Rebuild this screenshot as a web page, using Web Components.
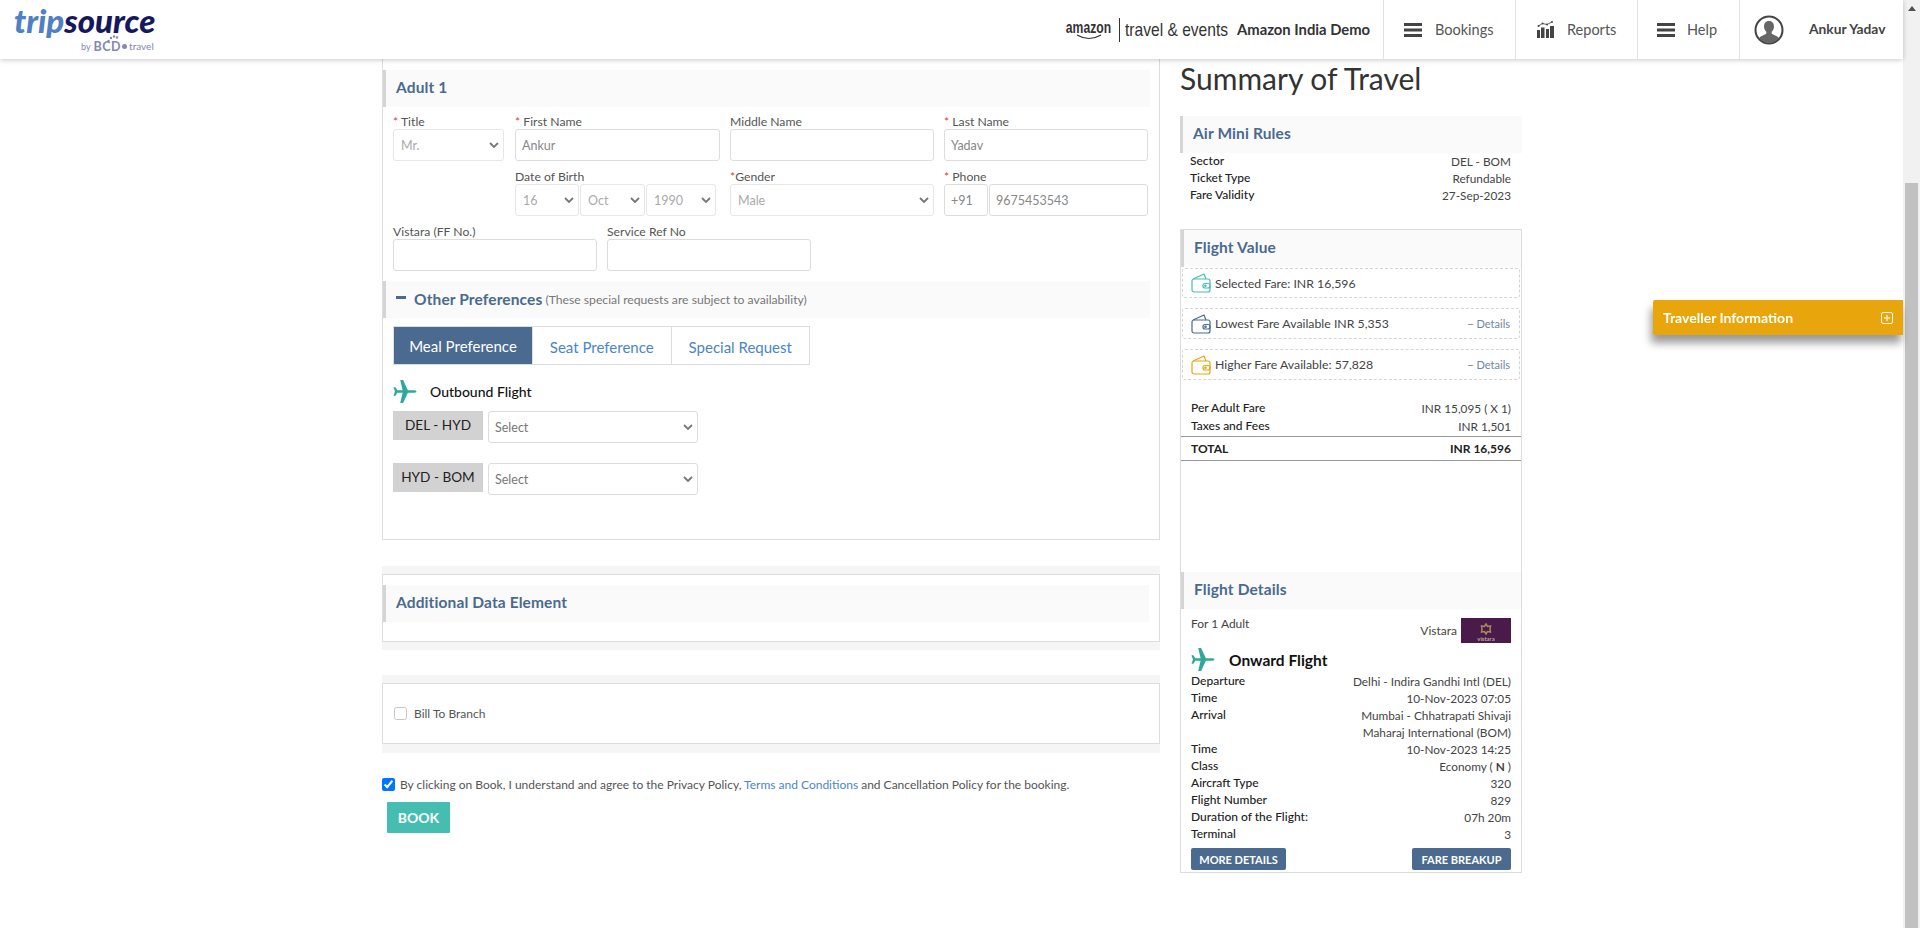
<!DOCTYPE html>
<html>
<head>
<meta charset="utf-8">
<title>TripSource</title>
<style>
html, body { margin: 0; height: 100%; overflow: hidden; background: #fff; }
body { font-family: Lato, "Liberation Sans", sans-serif; font-size: 12px; color: #444; }
</style>
</head>
<body>
<trip-app>
  <site-header slot="header"></site-header>
  <booking-form slot="left"></booking-form>
  <travel-summary slot="right"></travel-summary>
  <traveller-tab slot="float"></traveller-tab>
</trip-app>

<script>
const PLANE = '<svg viewBox="0 0 24 24" width="24" height="23" fill="#2fa89b"><path d="M7 0h3l5 10.6h7q2 .4 2 1.4t-2 1.4h-7L10 24H7l2.5-10.6H4L2 16.5H0L1.5 12 0 7.5h2l2 3.1h5.5z"/></svg>';
const CHEVRON = '<svg viewBox="0 0 10 6" width="10" height="6" fill="none" stroke="#777" stroke-width="1.8"><path d="M1 1l4 4 4-4"/></svg>';
const BURGER = '<svg viewBox="0 0 18 14" width="18" height="14" fill="#444"><path d="M0 0h18v3H0zM0 5.500h18v3H0zM0 11h18v3H0z"/></svg>';
const CHART = '<svg viewBox="0 0 17 17" width="17" height="17" fill="#444"><path d="M0 9h3v8H0zM4 6.500h3.500V17H4zM9 8h3v9H9zM13 5h4v12h-4z"/><path d="M1.500 5l4-2.500 4.500 1L15 1" fill="none" stroke="#666"/><circle cx="1.500" cy="5" r="1"/><circle cx="5.500" cy="2.500" r="1"/><circle cx="10" cy="3.500" r="1"/><circle cx="15" cy="1" r="1"/></svg>';

function wallet(color) {
  return `<svg viewBox="0 0 20 20" width="20" height="20" fill="none" stroke="${color}" stroke-width="1.200"><rect x="1" y="6" width="18" height="13" rx="2"/><path d="M2 6l11-5 2 5"/><rect x="12" y="10.500" width="7" height="4.500" rx="2"/><circle cx="14.500" cy="12.700" r=".7"/></svg>`;
}

function def(name, html, init) {
  const tpl = document.createElement('template');
  tpl.innerHTML = html;
  customElements.define(name, class extends HTMLElement {
    constructor() {
      super();
      this.attachShadow({ mode: 'open' }).appendChild(tpl.content.cloneNode(true));
      if (init) init(this, this.shadowRoot);
    }
  });
}

def('trip-app', `
<style>
:host { display: flex; height: 928px; }
.page { flex: 1; min-width: 0; display: flex; flex-direction: column; }
.main { display: flex; gap: 20px; padding-left: 382px; }
.bar { width: 17px; background: #f1f1f1; display: flex; flex-direction: column; }
.arrow { height: 17px; display: flex; align-items: center; justify-content: center; }
.gap { height: 166px; }
.thumb { flex: 1; background: #c1c1c1; margin: 0 2px; }
</style>
<div class="page">
  <slot name="header"></slot>
  <div class="main"><slot name="left"></slot><slot name="right"></slot></div>
</div>
<div class="bar">
  <div class="arrow"><svg width="8" height="5" viewBox="0 0 8 5" fill="#505050"><path d="M4 0l4 5H0z"/></svg></div>
  <div class="gap"></div>
  <div class="thumb"></div>
</div>
<slot name="float"></slot>`);

def('nav-item', `
<style>
:host { display: flex; align-items: center; height: 59px; border-left: 1px solid #e3e3e3; box-sizing: border-box; font-size: 14.500px; color: #555; }
::slotted(svg) { margin-right: 13px; }
</style>
<slot></slot>`);

def('site-header', `
<style>
:host { display: flex; align-items: center; height: 59px; background: #fff; box-shadow: 0 1px 5px rgba(0,0,0,.22); position: relative; z-index: 2; }
.logo { margin-left: 14px; width: 143px; display: flex; flex-direction: column; align-self: flex-start; }
.word { font: italic 900 33px/40px Lato, sans-serif; letter-spacing: 0; color: #16185f; height: 40px; white-space: nowrap; }
.word span { color: #4f7fc4; }
.by { position: relative; display: flex; align-items: center; font: 400 9px/13px Lato, sans-serif; color: #8587b4; margin-left: 67px; white-space: nowrap; height: 13px; }
.by b { font-size: 12.500px; letter-spacing: .5px; margin-left: 3px; }
.by i { display: inline-block; width: 5px; height: 5px; border-radius: 50%; background: #8587b4; margin: 0 2px 0 1px; }
.by em { font-style: normal; font-size: 10px; }
.by svg { position: absolute; left: 26px; top: -5px; }
.right { margin-left: auto; display: flex; align-items: center; }
.amz { width: 47px; text-align: center; color: #333; margin-top: 1px; }
.amz span { display: block; font: 700 16px/15px "Liberation Sans", sans-serif; transform: scaleX(.76); white-space: nowrap; margin: 0 -10px; }
.amz svg { display: block; margin: -1px auto 0; }
.sep { width: 1px; height: 24px; background: #333; margin: 0 5px 0 7px; }
.te { font: 400 19px/20px "Liberation Sans", sans-serif; color: #333; width: 101px; white-space: nowrap; transform: scaleX(.82); transform-origin: 0 50%; }
.demo { font-weight: 700; font-size: 14.800px; color: #333; margin: 0 11px 0 11px; width: 135px; white-space: nowrap; margin-top: -1px; }
.b { width: 132px; padding-left: 20px; box-sizing: border-box; }
.r { width: 122px; padding-left: 21px; box-sizing: border-box; }
.h { width: 102px; padding-left: 19px; box-sizing: border-box; }
.u { width: 164px; padding-left: 14px; box-sizing: border-box; }
.u svg { margin-right: 0; }
.name { font-weight: 700; color: #444; margin-left: 25px; white-space: nowrap; font-size: 13.800px; margin-top: -2px; }
</style>
<div class="logo">
  <div class="word"><span>trip</span>source</div>
  <div class="by">by<b>BCD</b><i></i><em>travel</em><svg width="12" height="8" viewBox="0 0 12 8" fill="#8587b4"><circle cx="1.500" cy="6" r="1.200"/><circle cx="4" cy="3" r="1.200"/><circle cx="7" cy="1.500" r="1.200"/><circle cx="10" cy="2.500" r="1.200"/></svg></div>
</div>
<div class="right">
  <div class="amz"><span>amazon</span><svg width="26" height="6" viewBox="0 0 26 6" fill="none" stroke="#333" stroke-width="1.200"><path d="M1 1q12 7 24 0"/></svg></div>
  <div class="sep"></div>
  <div class="te">travel &amp; events</div>
  <div class="demo">Amazon India Demo</div>
  <nav-item class="b">${BURGER}Bookings</nav-item>
  <nav-item class="r">${CHART}Reports</nav-item>
  <nav-item class="h"><span style="display:flex;margin-right:12px">${BURGER}</span>Help</nav-item>
  <nav-item class="u"><svg width="30" height="30" viewBox="0 0 30 30" fill="none"><circle cx="15" cy="15" r="13.500" stroke="#444" stroke-width="2"/><path fill="#666" d="M15 6c3.500 0 5 2.600 5 5.500 0 2.300-1 4-2.300 5.200v2l6 3c.6.400 1 1 1 1.600A12.500 12.500 0 0 1 15 28a12.500 12.500 0 0 1-9.700-4.700c0-.6.400-1.200 1-1.600l6-3v-2C11 15.500 10 13.800 10 11.500 10 8.600 11.500 6 15 6z"/></svg><span class="name">Ankur Yadav</span></nav-item>
</div>`);

def('section-head', `
<style>
:host { display: flex; align-items: center; height: 37px; background: #fafafa; border-left: 3px solid #d5d5d5; box-sizing: border-box; padding: 0 0 4px 10px; font-size: 15.500px; font-weight: 700; letter-spacing: .12px; color: #4a6a8f; white-space: nowrap; }
</style>
<slot></slot>`);

def('form-field', `
<style>
:host { display: block; }
.l { height: 14px; line-height: 14px; font-size: 12.200px; color: #555; white-space: nowrap; }
.s { color: #e0403a; display: none; }
:host([req]) .s { display: inline; }
:host([req="tight"]) .g { display: none; }
</style>
<div class="l"><span class="s">*<span class="g">&nbsp;</span></span><span class="t"></span></div>
<slot></slot>`, (el, root) => {
  root.querySelector('.t').textContent = el.getAttribute('label');
});

def('text-box', `
<style>
:host { display: flex; align-items: center; height: 32px; box-sizing: border-box; border: 1px solid #ddd; border-radius: 3px; padding: 0 6px; font-size: 12.500px; color: #888; background: #fff; white-space: nowrap; }
</style>
<slot></slot>`);

def('select-box', `
<style>
:host { display: flex; align-items: center; justify-content: space-between; height: 32px; box-sizing: border-box; border: 1px solid #e6e6e6; border-radius: 3px; padding: 0 4px 0 7px; font-size: 12.500px; color: #aaa; background: #fff; white-space: nowrap; }
:host([live]) { border-color: #ddd; color: #777; padding-left: 6px; }
</style>
<slot></slot>${CHEVRON}`);

def('pref-tabs', `
<style>
:host { display: flex; width: 417px; height: 39px; box-sizing: border-box; border: 1px solid #ddd; font-size: 15px; margin: 8px 0 0 10px; }
div { flex: 1; display: flex; align-items: center; justify-content: center; color: #4a86c5; border-left: 1px solid #ddd; padding-top: 2px; box-sizing: border-box; white-space: nowrap; }
.on { background: #4a6b8f; color: #fff; border-left: 0; padding-top: 1px; flex: 0 0 138px; }
</style>
<div class="on">Meal Preference</div><div>Seat Preference</div><div>Special Request</div>`);

def('leg-select', `
<style>
:host { display: flex; gap: 5px; margin-left: 10px; height: 32px; }
.tag { width: 90px; height: 29px; background: #d2d2d2; color: #222; font-size: 13.600px; display: flex; align-items: center; justify-content: center; white-space: nowrap; padding-bottom: 1px; box-sizing: border-box; }
select-box { width: 210px; }
</style>
<div class="tag"><slot></slot></div><select-box live>Select</select-box>`);

def('band-box', `
<style>
:host { display: block; background: #f5f5f5; padding: 8px 0; }
.in { background: #fff; border: 1px solid #ddd; box-sizing: border-box; }
</style>
<div class="in"><slot></slot></div>`);

def('booking-form', `
<style>
:host { display: block; width: 778px; flex: none; }
.panel { border: 1px solid #ddd; border-top: 0; height: 481px; box-sizing: border-box; padding: 11px 9px 0 0; }
.row { display: flex; margin: 8px 0 0 10px; }
.row + .row { margin-top: 9px; }
.dob { display: flex; gap: 1px; }
.tail { height: 37px; margin-top: 10px; padding-bottom: 2px; }
.pm { display: inline-block; width: 10px; height: 3px; background: #4a6a8f; margin: 0 8px 3px 0; }
.note { font-size: 12.200px; font-weight: 400; letter-spacing: 0; color: #777; margin-left: 3px; padding-top: 2px; }
.out { display: flex; align-items: center; height: 23px; margin: 15px 0 8px 10px; font-size: 14px; color: #111; }
.out span { margin-left: 13px; font-weight: 500; }
.phone { display: flex; gap: 1px; }
leg-select + leg-select { margin-top: 20px; }
.sec1 { margin-top: 26px; }
.sec1 section-head { margin: 10px 10px 19px 0; padding-bottom: 4px; }
.sec2 { margin-top: 25px; padding-bottom: 9px; }
.bill { height: 59px; display: flex; align-items: center; padding-left: 11px; font-size: 12px; color: #555; gap: 7px; }
.bill input { margin: 0; width: 13px; height: 13px; opacity: .4; }
.terms { display: flex; align-items: center; gap: 5px; margin-top: 23px; font-size: 12px; color: #555; white-space: nowrap; height: 16px; }
.terms input { margin: 0; width: 13px; height: 13px; }
.terms a { color: #4a86c5; text-decoration: none; }
.book { display: flex; align-items: center; justify-content: center; width: 63px; height: 31px; margin: 10px 0 0 5px; background: #46bdb1; color: #fff; font-size: 14px; font-weight: 700; border-radius: 1px; }
</style>
<div class="panel">
  <section-head>Adult 1</section-head>
  <div class="row">
    <form-field label="Title" req style="width:111px;margin-right:11px"><select-box>Mr.</select-box></form-field>
    <form-field label="First Name" req style="width:205px;margin-right:10px"><text-box>Ankur</text-box></form-field>
    <form-field label="Middle Name" style="width:204px;margin-right:10px"><text-box></text-box></form-field>
    <form-field label="Last Name" req style="width:204px"><text-box>Yadav</text-box></form-field>
  </div>
  <div class="row">
    <form-field label="Date of Birth" style="margin-left:122px;width:201px;margin-right:14px">
      <div class="dob"><select-box style="width:64px">16</select-box><select-box style="width:65px">Oct</select-box><select-box style="width:70px">1990</select-box></div>
    </form-field>
    <form-field label="Gender" req="tight" style="width:204px;margin-right:10px"><select-box>Male</select-box></form-field>
    <form-field label="Phone" req style="width:204px">
      <div class="phone"><text-box style="width:44px">+91</text-box><text-box style="flex:1">9675453543</text-box></div>
    </form-field>
  </div>
  <div class="row">
    <form-field label="Vistara (FF No.)" style="width:204px;margin-right:10px"><text-box></text-box></form-field>
    <form-field label="Service Ref No" style="width:204px"><text-box></text-box></form-field>
  </div>
  <section-head class="tail"><span class="pm"></span>Other Preferences<span class="note">(These special requests are subject to availability)</span></section-head>
  <pref-tabs></pref-tabs>
  <div class="out">${PLANE}<span>Outbound Flight</span></div>
  <leg-select>DEL - HYD</leg-select>
  <leg-select>HYD - BOM</leg-select>
</div>
<band-box class="sec1"><section-head>Additional Data Element</section-head></band-box>
<band-box class="sec2"><div class="bill"><input type="checkbox"><span>Bill To Branch</span></div></band-box>
<div class="terms"><input type="checkbox" checked><span>By clicking on Book, I understand and agree to the Privacy Policy, <a>Terms and Conditions</a> and Cancellation Policy for the booking.</span></div>
<div class="book">BOOK</div>`);

def('info-row', `
<style>
:host { display: flex; justify-content: space-between; align-items: flex-start; line-height: 17px; font-size: 12px; color: #222; }
.k { font-weight: 500; white-space: nowrap; }
.v { text-align: right; color: #444; font-size: 11.800px; margin-top: 1px; margin-bottom: -1px; }
</style>
<div class="k"></div><div class="v"><slot></slot></div>`, (el, root) => {
  root.querySelector('.k').textContent = el.getAttribute('k');
});

def('fare-card', `
<style>
:host { display: flex; align-items: center; box-sizing: border-box; border: 1px dashed #d5d5d5; border-radius: 3px; padding: 0 9px 0 8px; margin: 0 1px; font-size: 12.300px; color: #444; white-space: nowrap; }
.t { margin-left: 4px; flex: 1; }
.d { color: #6c87a5; font-size: 11px; }
</style>
<span class="i"></span><span class="t"><slot></slot></span><span class="d"></span>`, (el, root) => {
  root.querySelector('.i').innerHTML = wallet(el.getAttribute('color'));
  root.querySelector('.i').style.height = '20px';
  if (el.hasAttribute('details')) root.querySelector('.d').textContent = '− Details';
});

def('travel-summary', `
<style>
:host { display: block; width: 342px; flex: none; }
h1 { margin: 0; height: 57px; font-size: 30px; line-height: 38px; font-weight: 400; color: #333; white-space: nowrap; }
.rules { padding: 0 11px 0 10px; margin: -1px 0 26px; }
.box { border: 1px solid #ddd; height: 644px; box-sizing: border-box; }
.cards { display: flex; flex-direction: column; gap: 10px; margin: 1px 0 19px; }
.sum { padding: 0 10px; }
.sum info-row:first-child { margin-bottom: 1px; }
.tot { display: flex; justify-content: space-between; border-top: 1px solid #999; border-bottom: 1px solid #999; margin-top: 2px; height: 23px; align-items: center; font-weight: 700; font-size: 12px; color: #222; padding: 0 10px; }
.spacer { height: 111px; }
.for { display: flex; justify-content: space-between; padding: 9px 10px 0; height: 26px; font-size: 12px; color: #444; }
.for > span:first-child { margin-top: -2px; }
.vis { display: flex; gap: 4px; align-items: center; height: 25px; }
.logo { width: 50px; height: 25px; background: #4a1a4b; display: flex; flex-direction: column; align-items: center; justify-content: flex-end; color: #d6c9b0; font-size: 6px; line-height: 8px; }
.logo svg { display: block; }
.on { display: flex; align-items: center; padding: 0 10px; margin-top: 4px; height: 23px; font-size: 15.500px; font-weight: 700; color: #111; gap: 14px; margin-bottom: 1px; }
.det { padding: 0 10px; }
.btns { display: flex; justify-content: space-between; padding: 6px 10px 0; }
.btn { height: 22px; background: #4a6b8f; color: #fff; font-size: 11px; font-weight: 700; display: flex; align-items: center; justify-content: center; border-radius: 2px; white-space: nowrap; }
</style>
<h1>Summary of Travel</h1>
<section-head>Air Mini Rules</section-head>
<div class="rules">
  <info-row k="Sector">DEL - BOM</info-row>
  <info-row k="Ticket Type">Refundable</info-row>
  <info-row k="Fare Validity">27-Sep-2023</info-row>
</div>
<div class="box">
  <section-head>Flight Value</section-head>
  <div class="cards">
    <fare-card color="#46bdb1" style="height:30px">Selected Fare: INR 16,596</fare-card>
    <fare-card color="#4a6b8f" details style="height:31px">Lowest Fare Available INR 5,353</fare-card>
    <fare-card color="#e8a60c" details style="height:31px">Higher Fare Available: 57,828</fare-card>
  </div>
  <div class="sum">
    <info-row k="Per Adult Fare">INR 15,095 ( X 1)</info-row>
    <info-row k="Taxes and Fees">INR 1,501</info-row>
  </div>
  <div class="tot"><span>TOTAL</span><span>INR 16,596</span></div>
  <div class="spacer"></div>
  <section-head>Flight Details</section-head>
  <div class="for"><span>For 1 Adult</span><span class="vis">Vistara<span class="logo"><svg width="12" height="12" viewBox="0 0 12 12" fill="none" stroke="#a88a55" stroke-width="1.500"><path d="M6 1l1.500 2.500L10.500 3 10 6l.5 3-3-.5L6 11 4.500 8.500 1.500 9 2 6l-.5-3 3 .5z"/></svg>vistara</span></span></div>
  <div class="on">${PLANE}<span>Onward Flight</span></div>
  <div class="det">
    <info-row k="Departure">Delhi - Indira Gandhi Intl (DEL)</info-row>
    <info-row k="Time">10-Nov-2023 07:05</info-row>
    <info-row k="Arrival">Mumbai - Chhatrapati Shivaji<br>Maharaj International (BOM)</info-row>
    <info-row k="Time">10-Nov-2023 14:25</info-row>
    <info-row k="Class">Economy ( <b>N</b> )</info-row>
    <info-row k="Aircraft Type">320</info-row>
    <info-row k="Flight Number">829</info-row>
    <info-row k="Duration of the Flight:">07h 20m</info-row>
    <info-row k="Terminal">3</info-row>
  </div>
  <div class="btns"><div class="btn" style="width:95px">MORE DETAILS</div><div class="btn" style="width:99px">FARE BREAKUP</div></div>
</div>`);

def('traveller-tab', `
<style>
:host { position: fixed; left: 1653px; top: 300px; width: 250px; height: 35px; background: #e8a60c; color: #fff; box-sizing: border-box; padding: 0 10px; display: flex; align-items: center; justify-content: space-between; font-size: 14px; font-weight: 700; box-shadow: -2px 8px 8px rgba(0,0,0,.4); border-radius: 2px 0 0 2px; z-index: 3; }
</style>
<span>Traveller Information</span>
<svg width="12" height="12" viewBox="0 0 12 12" fill="none" stroke="#fff"><rect x=".5" y=".5" width="11" height="11" rx="1.500"/><path d="M3 6h6M6 3v6"/></svg>`);
</script>
</body>
</html>
